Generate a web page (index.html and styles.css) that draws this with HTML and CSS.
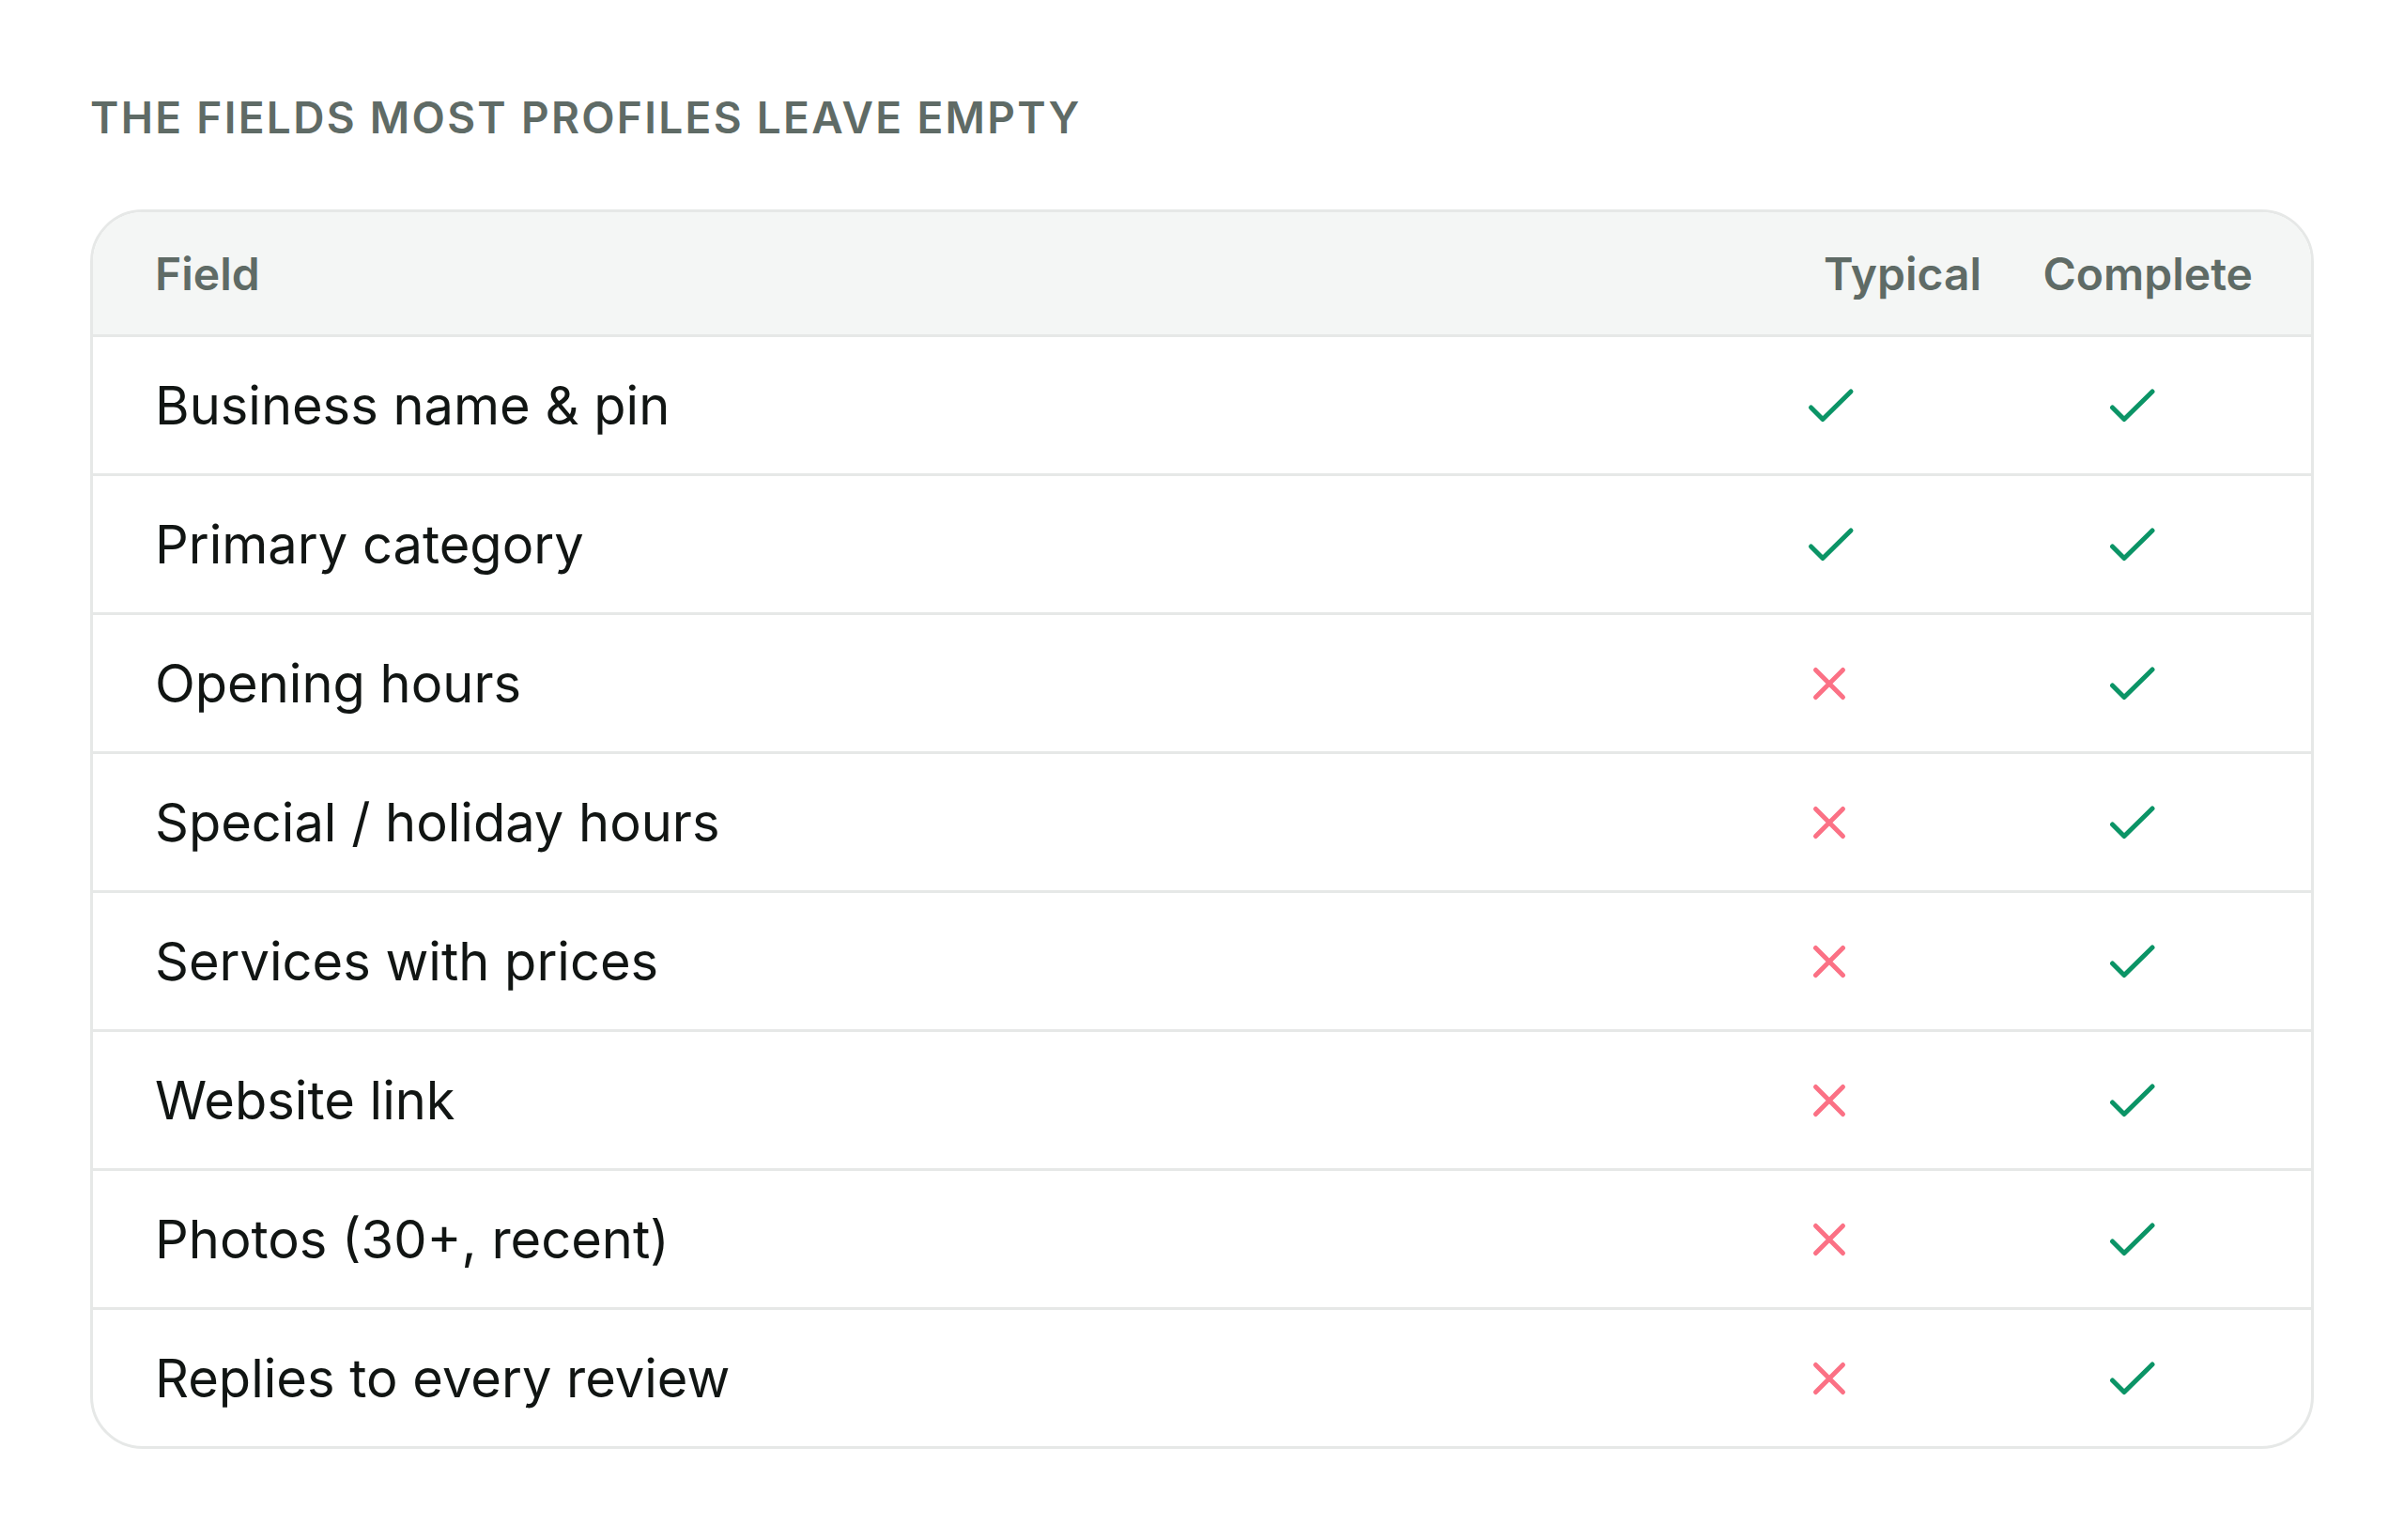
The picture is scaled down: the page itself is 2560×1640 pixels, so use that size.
FILE: index.html
```html
<!DOCTYPE html>
<html lang="en">
<head>
  <meta charset="UTF-8">
  <meta name="viewport" content="width=device-width, initial-scale=1.0">
  <title>Profile fields</title>
<link rel="stylesheet" href="styles.css">
</head>
<body>

  <div class="page">
    <h2 class="title">The fields most profiles leave empty</h2>

    <div class="fields-table">
      <div class="row head">
        <div class="cell name">Field</div>
        <div class="cell col">Typical</div>
        <div class="cell col">Complete</div>
      </div>

      <div class="row">
        <div class="cell name">Business name &amp; pin</div>
        <div class="cell mark"><svg class="yes" viewBox="0 0 56 56"><path d="M49 13 19 42.5 6.5 30"/></svg></div>
        <div class="cell mark"><svg class="yes" viewBox="0 0 56 56"><path d="M49 13 19 42.5 6.5 30"/></svg></div>
      </div>
      <div class="row">
        <div class="cell name">Primary category</div>
        <div class="cell mark"><svg class="yes" viewBox="0 0 56 56"><path d="M49 13 19 42.5 6.5 30"/></svg></div>
        <div class="cell mark"><svg class="yes" viewBox="0 0 56 56"><path d="M49 13 19 42.5 6.5 30"/></svg></div>
      </div>
      <div class="row">
        <div class="cell name">Opening hours</div>
        <div class="cell mark"><svg class="no" viewBox="0 0 56 56"><path d="M40.5 13.5 11.5 42.5M11.5 13.5l29 29"/></svg></div>
        <div class="cell mark"><svg class="yes" viewBox="0 0 56 56"><path d="M49 13 19 42.5 6.5 30"/></svg></div>
      </div>
      <div class="row">
        <div class="cell name">Special / holiday hours</div>
        <div class="cell mark"><svg class="no" viewBox="0 0 56 56"><path d="M40.5 13.5 11.5 42.5M11.5 13.5l29 29"/></svg></div>
        <div class="cell mark"><svg class="yes" viewBox="0 0 56 56"><path d="M49 13 19 42.5 6.5 30"/></svg></div>
      </div>
      <div class="row">
        <div class="cell name">Services with prices</div>
        <div class="cell mark"><svg class="no" viewBox="0 0 56 56"><path d="M40.5 13.5 11.5 42.5M11.5 13.5l29 29"/></svg></div>
        <div class="cell mark"><svg class="yes" viewBox="0 0 56 56"><path d="M49 13 19 42.5 6.5 30"/></svg></div>
      </div>
      <div class="row">
        <div class="cell name">Website link</div>
        <div class="cell mark"><svg class="no" viewBox="0 0 56 56"><path d="M40.5 13.5 11.5 42.5M11.5 13.5l29 29"/></svg></div>
        <div class="cell mark"><svg class="yes" viewBox="0 0 56 56"><path d="M49 13 19 42.5 6.5 30"/></svg></div>
      </div>
      <div class="row">
        <div class="cell name">Photos (30+, recent)</div>
        <div class="cell mark"><svg class="no" viewBox="0 0 56 56"><path d="M40.5 13.5 11.5 42.5M11.5 13.5l29 29"/></svg></div>
        <div class="cell mark"><svg class="yes" viewBox="0 0 56 56"><path d="M49 13 19 42.5 6.5 30"/></svg></div>
      </div>
      <div class="row">
        <div class="cell name">Replies to every review</div>
        <div class="cell mark"><svg class="no" viewBox="0 0 56 56"><path d="M40.5 13.5 11.5 42.5M11.5 13.5l29 29"/></svg></div>
        <div class="cell mark"><svg class="yes" viewBox="0 0 56 56"><path d="M49 13 19 42.5 6.5 30"/></svg></div>
      </div>
    </div>
  </div>

</body>
</html>
```

FILE: styles.css
```css
body {
  margin: 0;
  padding: 0;
  background: #ffffff;
  font-family: 'Inter', 'Noto Sans', sans-serif;
  color: #111513;
}

.page {
  padding: 98px 96px;
}

.title {
  margin: 0 0 71px;
  font-size: 46px;
  font-weight: 600;
  line-height: 54px;
  letter-spacing: 0.05em;
  text-transform: uppercase;
  color: #5f6b66;
}

.fields-table {
  border: 3px solid #e6e8e7;
  border-radius: 56px;
  overflow: hidden;
}

.row {
  display: grid;
  grid-template-columns: 1fr 320px 256px;
  column-gap: 33px;
  align-items: center;
  height: 145px;
  padding: 0 62px 0 66px;
  border-bottom: 3px solid #e6e8e7;
}

.row:last-child {
  border-bottom: none;
}

.row.head {
  height: 130px;
  background: #f4f6f5;
  font-size: 48px;
  font-weight: 600;
  color: #5f6b66;
}

.cell.name {
  font-size: 56px;
}

.head .cell.name {
  font-size: 48px;
}

.head .cell.col {
  text-align: right;
}

.cell.mark {
  display: flex;
  justify-content: center;
}

.cell.mark svg {
  width: 56px;
  height: 56px;
  fill: none;
  stroke-width: 5;
  stroke-linecap: round;
  stroke-linejoin: round;
}

svg.yes {
  stroke: #0b9466;
}

svg.no {
  stroke: #fb7185;
}
```
